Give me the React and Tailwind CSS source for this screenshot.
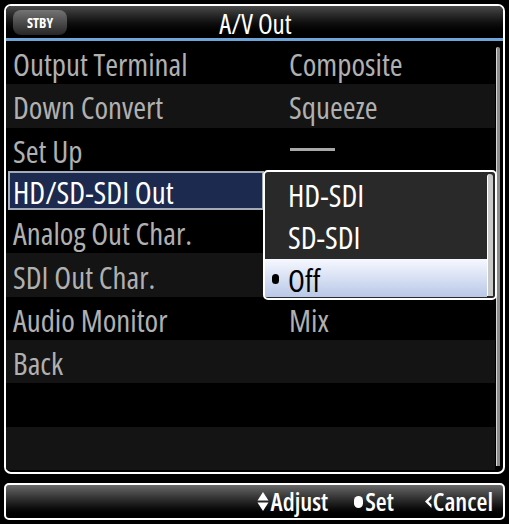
import React from "react";

const rows = [
  { label: "Output Terminal", value: "Composite" },
  { label: "Down Convert", value: "Squeeze" },
  { label: "Set Up", dash: true },
  { label: "HD/SD-SDI Out", active: true },
  { label: "Analog Out Char." },
  { label: "SDI Out Char." },
  { label: "Audio Monitor", value: "Mix" },
  { label: "Back" },
  { label: "" },
  { label: "" },
];

function MenuRow({ row, index }) {
  const dark = index % 2 === 1;
  if (row.active) {
    return (
      <div className="flex-1 flex items-center">
        <div className="ml-[2px] w-[256px] h-[39px] border-2 border-[#a3abbb] bg-[#1b2a4e] flex items-center pl-[3px] text-white text-[31px] leading-none pt-[3px]">
          {row.label}
        </div>
      </div>
    );
  }
  return (
    <div className={`flex-1 flex items-center pl-[7px] text-[31px] leading-none text-[#b0b0b0] pt-[4px] ${dark ? "bg-[#141414]" : "bg-black"}`}>
      <div className="w-[276px] whitespace-nowrap">{row.label}</div>
      {row.value && <div className="whitespace-nowrap">{row.value}</div>}
      {row.dash && <div className="w-[45px] h-[3px] bg-[#a8a8a8] -mt-[4px] ml-[1px]" />}
    </div>
  );
}

function Popup() {
  return (
    <div className="absolute left-[257px] top-[129px] w-[234px] h-[130px] border-2 border-white rounded-[5px] bg-[#292929] flex z-10">
      <div className="flex-1 flex flex-col">
        <div className="h-[42px] flex items-center pl-[23px] pt-[4px] text-[31px] leading-none text-white">HD-SDI</div>
        <div className="h-[43px] flex items-center pl-[23px] pt-[4px] text-[31px] leading-none text-white">SD-SDI</div>
        <div className="mt-[2px] h-[38px] flex items-center pl-[7px] pt-[4px] text-[31px] leading-none text-black bg-gradient-to-b from-[#f6f8fe] to-[#b9c8e8]">
          <span className="inline-block w-[7px] h-[10px] rounded-full bg-black mr-[9px] -mt-[3px]" />
          <span>Off</span>
        </div>
      </div>
      <div className="w-[6px] my-[2px] mr-[2px] rounded-t-[3px] bg-[#c9c9c9] border-l border-white" />
    </div>
  );
}

function UpDown() {
  return (
    <svg width="12" height="21" viewBox="0 0 12 21" className="mr-[2px]">
      <polygon points="6,1 11.5,9.5 0.5,9.5" fill="white" />
      <polygon points="0.5,11.5 11.5,11.5 6,20" fill="white" />
    </svg>
  );
}

export default function App() {
  return (
    <div className="w-[509px] h-[524px] bg-black p-[4px] flex flex-col font-['Open_Sans','Liberation_Sans',sans-serif] font-stretch-condensed">
      <div className="h-[470px] border-2 border-white rounded-[7px] bg-black flex flex-col overflow-hidden">
        <div className="relative h-[35px] border-b-[3px] border-[#6fa4d8] bg-gradient-to-b from-[#4a4a4a] via-[#121212] to-black flex items-center justify-center">
          <div className="absolute left-[7px] top-[4px] w-[54px] h-[25px] rounded-[8px] bg-gradient-to-b from-[#747474] to-[#262626] flex items-center justify-center text-white text-[14px] font-bold leading-none">
            STBY
          </div>
          <div className="text-white text-[27px] leading-none pt-[2px] ml-[2px]">A/V Out</div>
        </div>
        <div className="relative flex-1 flex flex-col pb-[2px]">
          <div className="flex-1 flex flex-col mr-[8px]">
            {rows.map((row, i) => (
              <MenuRow key={i} row={row} index={i} />
            ))}
          </div>
          <div className="absolute right-[3px] top-[6px] bottom-[6px] w-[4px] rounded-t-[2px] bg-[#8c8c8c] border-l border-[#d6d6d6]" />
          <Popup />
        </div>
      </div>
      <div className="mt-[9px] h-[37px] border-2 border-white rounded-[5px] bg-gradient-to-b from-[#6a6a6a] via-[#262626] to-black flex items-center justify-end pr-[10px] text-white text-[25px] font-semibold leading-none">
        <div className="flex items-center">
          <UpDown />
          <span>Adjust</span>
        </div>
        <div className="flex items-center ml-[26px]">
          <span className="inline-block w-[9px] h-[12px] rounded-full bg-white mr-[2px]" />
          <span>Set</span>
        </div>
        <div className="flex items-center ml-[30px]">
          <svg width="8" height="13" viewBox="0 0 8 13" className="mr-[1px]">
            <polygon points="7.5,0 1,6.5 7.5,13 7.5,9.5 4.5,6.5 7.5,3.5" fill="white" />
          </svg>
          <span>Cancel</span>
        </div>
      </div>
    </div>
  );
}
